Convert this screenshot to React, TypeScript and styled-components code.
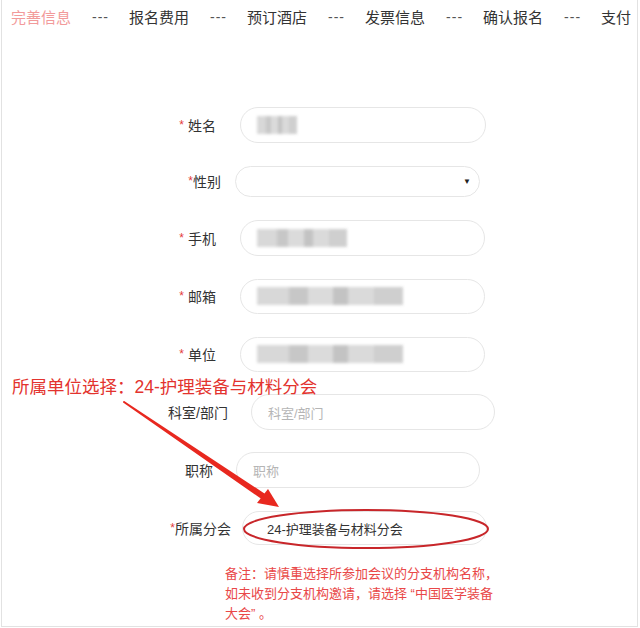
import styled, { createGlobalStyle } from "styled-components";

const GlobalStyle = createGlobalStyle`
  html, body {
    margin: 0;
    padding: 0;
    background: #fff;
  }
  body {
    font-family: "Liberation Sans", "Noto Sans CJK SC", sans-serif;
    color: #333;
  }
`;

type Field = {
  label: string;
  required?: boolean;
  starGap?: boolean;
  labelEnd: number;
  left: number;
  width: number;
  height: number;
  rowHeight: number;
  kind: "blur" | "select" | "placeholder" | "value";
  text?: string;
  blurWidth?: number;
};

const fields: Field[] = [
  { label: "姓名", required: true, starGap: true, labelEnd: 214, left: 238, width: 246, height: 36, rowHeight: 56, kind: "blur", blurWidth: 40 },
  { label: "性别", required: true, labelEnd: 219, left: 233, width: 245, height: 31, rowHeight: 56, kind: "select" },
  { label: "手机", required: true, starGap: true, labelEnd: 214, left: 238, width: 245, height: 36, rowHeight: 58, kind: "blur", blurWidth: 90 },
  { label: "邮箱", required: true, starGap: true, labelEnd: 214, left: 238, width: 245, height: 35, rowHeight: 58, kind: "blur", blurWidth: 146 },
  { label: "单位", required: true, starGap: true, labelEnd: 214, left: 238, width: 245, height: 35, rowHeight: 58, kind: "blur", blurWidth: 146 },
  { label: "科室/部门", labelEnd: 226, left: 249, width: 244, height: 36, rowHeight: 58, kind: "placeholder", text: "科室/部门" },
  { label: "职称", labelEnd: 211, left: 234, width: 244, height: 36, rowHeight: 58, kind: "placeholder", text: "职称" },
  { label: "所属分会", required: true, labelEnd: 229, left: 240, width: 245, height: 34, rowHeight: 58, kind: "value", text: "24-护理装备与材料分会" },
];

const steps = ["报名费用", "预订酒店", "发票信息", "确认报名", "支付"];

export default function App() {
  return (
    <>
      <GlobalStyle />
      <Page>
        <Steps>
          <Step active>完善信息</Step>
          {steps.map((s) => (
            <StepGroup key={s}>
              <Dash>---</Dash>
              <Step>{s}</Step>
            </StepGroup>
          ))}
        </Steps>

        <Form>
          {fields.map((f) => (
            <Row key={f.label} h={f.rowHeight}>
              <Label w={f.labelEnd}>
                {f.required && <Star gap={f.starGap}>*</Star>}
                {f.label}
              </Label>
              <Box
                style={{ marginLeft: f.left - f.labelEnd, width: f.width, height: f.height }}
              >
                {f.kind === "blur" && <Blurred w={f.blurWidth ?? 60} />}
                {f.kind === "select" && <Caret>▼</Caret>}
                {f.kind === "placeholder" && <Placeholder>{f.text}</Placeholder>}
                {f.kind === "value" && <Value>{f.text}</Value>}
              </Box>
            </Row>
          ))}
        </Form>

        <Note>
          备注：请慎重选择所参加会议的分支机构名称，如未收到分支机构邀请，请选择 “中国医学装备大会” 。
        </Note>

        <Callout>所属单位选择：24-护理装备与材料分会</Callout>

        <Marks width="640" height="628" viewBox="0 0 640 628">
          <path d="M122 402 L266 497 L264 501 Z" fill="#e8281f" stroke="#e8281f" strokeWidth="2" strokeLinejoin="round" />
          <polygon points="277,507 255,503 266,489" fill="#e8281f" />
          <ellipse cx="364" cy="529" rx="122" ry="19" fill="none" stroke="#c8262a" strokeWidth="2" />
        </Marks>
      </Page>
    </>
  );
}

const Page = styled.div`
  position: relative;
  width: 635px;
  height: 626px;
  margin-left: 1px;
  border: 1px solid #e2e2e2;
  border-top: none;
  overflow: hidden;
`;

const Steps = styled.div`
  display: flex;
  align-items: center;
  gap: 21px;
  height: 33px;
  padding-left: 9px;
  font-size: 15px;
  white-space: nowrap;
`;

const StepGroup = styled.div`
  display: flex;
  align-items: center;
  gap: 20px;
`;

const Step = styled.span<{ active?: boolean }>`
  color: ${({ active }) => (active ? "#f29a9a" : "#333")};
`;

const Dash = styled.span`
  color: #555;
  font-size: 14px;
  letter-spacing: 1px;
`;

const Form = styled.div`
  display: flex;
  flex-direction: column;
  padding-top: 64px;
`;

const Row = styled.div<{ h: number }>`
  display: flex;
  align-items: center;
  height: ${({ h }) => h}px;
`;

const Label = styled.div<{ w: number }>`
  width: ${({ w }) => w}px;
  flex-shrink: 0;
  text-align: right;
  font-size: 14px;
  color: #333;
  white-space: nowrap;
`;

const Star = styled.span<{ gap?: boolean }>`
  color: #e33b3b;
  font-size: 12px;
  position: relative;
  top: -2px;
  margin-right: ${({ gap }) => (gap ? "4px" : "0")};
`;

const Box = styled.div`
  position: relative;
  display: flex;
  align-items: center;
  box-sizing: border-box;
  border: 1px solid #e6e6e6;
  border-radius: 18px;
  padding: 0 16px;
  flex-shrink: 0;
`;

const Blurred = styled.div<{ w: number }>`
  width: ${({ w }) => w}px;
  height: 18px;
  background:
    linear-gradient(90deg, #d4d4d4 0 22%, #c2c2c2 22% 35%, #d8d8d8 35% 52%, #bdbdbd 52% 62%, #d6d6d6 62% 80%, #cacaca 80% 100%);
  filter: blur(1.5px);
  opacity: 0.9;
`;

const Caret = styled.span`
  margin-left: auto;
  margin-right: -8px;
  font-size: 8px;
  color: #222;
`;

const Placeholder = styled.span`
  font-size: 13px;
  color: #b5b5b5;
`;

const Value = styled.span`
  font-size: 13px;
  color: #333;
  padding-left: 8px;
`;

const Note = styled.div`
  margin: 7px 0 0 223px;
  width: 277px;
  font-size: 13px;
  line-height: 20px;
  color: #e94848;
`;

const Callout = styled.div`
  position: absolute;
  left: 10px;
  top: 373px;
  font-size: 17.5px;
  color: #e3332e;
  white-space: nowrap;
`;

const Marks = styled.svg`
  position: absolute;
  left: 0;
  top: 0;
  pointer-events: none;
`;
